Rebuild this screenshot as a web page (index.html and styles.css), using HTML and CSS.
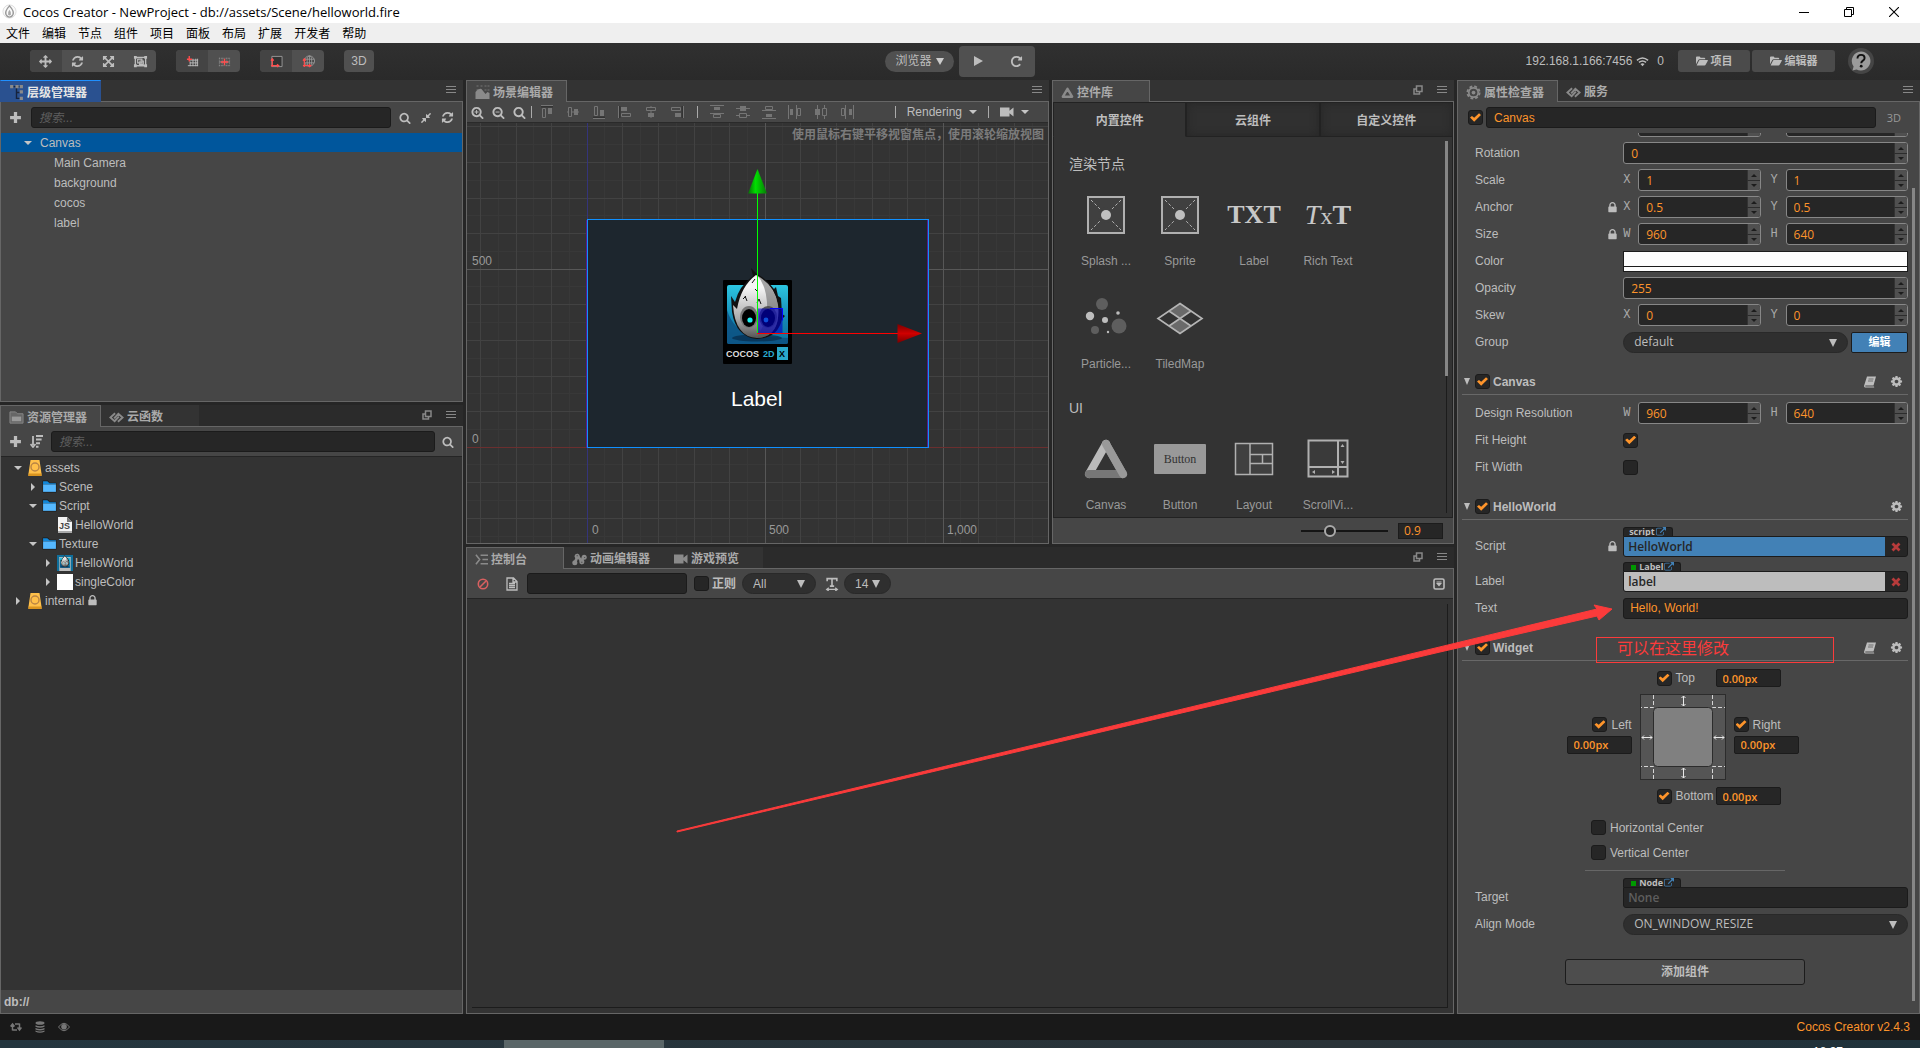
FILE: index.html
```html
<!DOCTYPE html>
<html lang="zh-CN">
<head>
<meta charset="utf-8">
<title>Cocos Creator - NewProject</title>
<link rel="stylesheet" href="styles.css">
</head>
<body>
<svg class="defs" aria-hidden="true">
  <defs>
    <symbol id="i-move" viewBox="0 0 1792 1792"><path d="M1792 896q0 26-19 45l-256 256q-19 19-45 19t-45-19-19-45v-128h-384v384h128q26 0 45 19t19 45-19 45l-256 256q-19 19-45 19t-45-19l-256-256q-19-19-19-45t19-45 45-19h128v-384h-384v128q0 26-19 45t-45 19-45-19l-256-256q-19-19-19-45t19-45l256-256q19-19 45-19t45 19 19 45v128h384v-384h-128q-26 0-45-19t-19-45 19-45l256-256q19-19 45-19t45 19l256 256q19 19 19 45t-19 45-45 19h-128v384h384v-128q0-26 19-45t45-19 45 19l256 256q19 19 19 45z"/></symbol>
    <symbol id="i-refresh" viewBox="0 0 1792 1792"><path d="M1639 1056q0 5-1 7-64 268-268 434.5t-478 166.5q-146 0-282.5-55t-243.5-157l-129 129q-19 19-45 19t-45-19-19-45v-448q0-26 19-45t45-19h448q26 0 45 19t19 45-19 45l-137 137q71 66 161 102t187 36q134 0 250-65t186-179q11-17 53-117 8-23 30-23h192q13 0 22.5 9.5t9.5 22.5zm25-800v448q0 26-19 45t-45 19h-448q-26 0-45-19t-19-45 19-45l138-138q-148-137-349-137-134 0-250 65t-186 179q-11 17-53 117-8 23-30 23h-199q-13 0-22.5-9.5t-9.5-22.5v-7q65-268 270-434.5t480-166.5q146 0 284 55.5t245 156.5l130-129q19-19 45-19t45 19 19 45z"/></symbol>
    <symbol id="i-repeat" viewBox="0 0 1792 1792"><path d="M1664 256v448q0 26-19 45t-45 19h-448q-42 0-59-40-17-39 14-69l138-138q-148-137-349-137-104 0-198.500 40.500t-163.500 109.500-109.500 163.500-40.500 198.500 40.500 198.500 109.500 163.500 163.500 109.500 198.500 40.500q119 0 225-52t179-147q7-10 23-12 15 0 25 9l137 138q9 8 9.500 20.500t-7.500 22.500q-109 132-264 204.500t-327 72.500q-156 0-298-61t-245-164-164-245-61-298 61-298 164-245 245-164 298-61q147 0 284.500 55.500t244.500 156.500l130-129q29-31 70-14 39 17 39 59z"/></symbol>
    <symbol id="i-expand" viewBox="0 0 1792 1792"><path d="M1411 541l-355 355 355 355 144-144q29-31 70-14 39 17 39 59v448q0 26-19 45t-45 19h-448q-42 0-59-40-17-39 14-69l144-144-355-355-355 355 144 144q31 30 14 69-17 40-59 40h-448q-26 0-45-19t-19-45v-448q0-42 40-59 39-17 69 14l144 144 355-355-355-355-144 144q-19 19-45 19-12 0-24-5-40-17-40-59v-448q0-26 19-45t45-19h448q42 0 59 40 17 39-14 69l-144 144 355 355 355-355-144-144q-31-30-14-69 17-40 59-40h448q26 0 45 19t19 45v448q0 42-39 59-13 5-25 5-26 0-45-19z"/></symbol>
    <symbol id="i-compress" viewBox="0 0 1792 1792"><path d="M896 960v448q0 26-19 45t-45 19-45-19l-144-144-332 332q-10 10-23 10t-23-10l-114-114q-10-10-10-23t10-23l332-332-144-144q-19-19-19-45t19-45 45-19h448q26 0 45 19t19 45zm755-672q0 13-10 23l-332 332 144 144q19 19 19 45t-19 45-45 19h-448q-26 0-45-19t-19-45v-448q0-26 19-45t45-19 45 19l144 144 332-332q10-10 23-10t23 10l114 114q10 10 10 23z"/></symbol>
    <symbol id="i-search" viewBox="0 0 1792 1792"><path d="M1216 832q0-185-131.500-316.500t-316.500-131.500-316.500 131.500-131.500 316.500 131.500 316.500 316.500 131.500 316.500-131.500 131.500-316.500zm512 832q0 52-38 90t-90 38q-54 0-90-38l-343-342q-179 124-399 124-143 0-273.500-55.500t-225-150-150-225-55.500-273.500 55.500-273.500 150-225 225-150 273.500-55.500 273.500 55.500 225 150 150 225 55.500 273.500q0 220-124 399l343 343q37 37 37 90z"/></symbol>
    <symbol id="i-zoomin" viewBox="0 0 1792 1792"><use href="#i-search"/><path d="M704 560h128v208h208v128h-208v208h-128v-208h-208v-128h208z"/></symbol>
    <symbol id="i-zoomout" viewBox="0 0 1792 1792"><use href="#i-search"/><path d="M496 768h544v128h-544z"/></symbol>
    <symbol id="i-lock" viewBox="0 0 1792 1792"><path d="M640 768h512v-192q0-106-75-181t-181-75-181 75-75 181v192zm832 96v576q0 40-28 68t-68 28h-960q-40 0-68-28t-28-68v-576q0-40 28-68t68-28h32v-192q0-184 132-316t316-132 316 132 132 316v192h32q40 0 68 28t28 68z"/></symbol>
    <symbol id="i-cog" viewBox="0 0 1792 1792"><path d="M1152 896q0-106-75-181t-181-75-181 75-75 181 75 181 181 75 181-75 75-181zm512-109v222q0 12-8 23t-20 13l-185 28q-19 54-39 91 35 50 107 138 10 12 10 25t-9 23q-27 37-99 108t-94 71q-12 0-26-9l-138-108q-44 23-91 38-16 136-29 186-7 28-36 28h-222q-14 0-24.500-8.500t-11.500-21.500l-28-184q-49-16-90-37l-141 107q-10 9-25 9-14 0-25-11-126-114-165-168-7-10-7-23 0-12 8-23 15-21 51-66.500t54-70.500q-27-50-41-99l-183-27q-13-2-21-12.500t-8-23.500v-222q0-12 8-23t19-13l186-28q14-46 39-92-40-57-107-138-10-12-10-24 0-10 9-23 26-36 98.500-107.500t94.500-71.500q13 0 26 10l138 107q44-23 91-38 16-136 29-186 7-28 36-28h222q14 0 24.500 8.500t11.500 21.500l28 184q49 16 90 37l142-107q9-9 24-9 13 0 25 10 129 119 165 170 7 8 7 22 0 12-8 23-15 21-51 66.500t-54 70.500q26 50 41 98l183 28q13 2 21 12.500t8 23.500z"/></symbol>
    <symbol id="i-ext" viewBox="0 0 1792 1792"><path d="M1408 928v320q0 119-84.500 203.500t-203.500 84.500h-832q-119 0-203.500-84.500t-84.500-203.500v-832q0-119 84.500-203.500t203.500-84.500h704q14 0 23 9t9 23v64q0 14-9 23t-23 9h-704q-66 0-113 47t-47 113v832q0 66 47 113t113 47h832q66 0 113-47t47-113v-320q0-14 9-23t23-9h64q14 0 23 9t9 23zm384-864v512q0 26-19 45t-45 19-45-19l-176-176-652 652q-10 10-23 10t-23-10l-114-114q-10-10-10-23t10-23l652-652-176-176q-19-19-19-45t19-45 45-19h512q26 0 45 19t19 45z"/></symbol>
    <symbol id="i-plus" viewBox="0 0 12 12"><path d="M4.500 1h3v3.500H11v3H7.500V11h-3V7.500H1v-3h3.500z"/></symbol>
    <symbol id="i-rect" viewBox="0 0 16 14"><path d="M2.500 2v10M13.500 2v10M2 2.500h12M2 11.500h12" fill="none" stroke="currentColor" stroke-width="1.400"/><path d="M1 1h3v3H1zM12 1h3v3h-3zM1 10h3v3H1zM12 10h3v3h-3z"/><path d="M5 4.500h4.500v4H5zM7.500 6.500H11v3.500H7z" fill="none" stroke="currentColor" stroke-width="1.200"/></symbol>
    <symbol id="i-pivot" viewBox="0 0 14 12"><path d="M4 4.500h9M4 7.500h9M2 10.500h11M4.500 6v5M7.500 3v8M10.500 3v8M12.500 3v8" stroke="#bbb" fill="none"/><path d="M3.500 0v6M1 3.500h5.500" stroke="#ff4d4d" stroke-width="1.500" fill="none"/></symbol>
    <symbol id="i-center" viewBox="0 0 14 12"><path d="M1.500 2v9M4.500 2v9M9.500 2v9M12.500 2v9M1 2.500h12M1 10.500h12" stroke="#8d8d8d" stroke-dasharray="1 1" fill="none"/><path d="M1 6.500h12" stroke="#8d8d8d"/><path d="M7 3v7M3 6.500h8" stroke="#ff4d4d" stroke-width="1.500" fill="none"/></symbol>
    <symbol id="i-local" viewBox="0 0 14 14"><path d="M2 1.500h11v11H2z" fill="#333" stroke="#999"/><path d="M2.500 5v8M1 11.500h8M1 6l1.500-2L4 6M7.500 10l2 1.500-2 1.500" stroke="#ff4d4d" stroke-width="1.300" fill="none"/></symbol>
    <symbol id="i-global" viewBox="0 0 14 14"><circle cx="8" cy="6.500" r="5.500" fill="#444" stroke="#999"/><ellipse cx="8" cy="6.500" rx="2.500" ry="5.500" fill="none" stroke="#999"/><path d="M3 4.500h10M3 8.500h10M8 1v11" stroke="#999"/><path d="M2.500 5v8M1 11.500h8M1 6l1.500-2L4 6M7.500 10l2 1.500-2 1.500" stroke="#ff4d4d" stroke-width="1.300" fill="none"/></symbol>
    <symbol id="i-play" viewBox="0 0 10 12"><path d="M1 1l9 5-9 5z"/></symbol>
    <symbol id="i-wifi" viewBox="0 0 14 11"><g fill="none" stroke="currentColor" stroke-width="1.700"><path d="M1 4.200q6-5 12 0M3.200 6.500q3.800-3.200 7.600 0"/></g><path d="M4.800 8.200q2.200-1.800 4.400 0L7 10.600z"/></symbol>
    <symbol id="i-folder" viewBox="0 0 13 10"><path d="M0 8.500V1q0-1 1-1h3l1 1.500h4q1 0 1 1V3H4Q3 3 2.500 3.800zM.8 9.600L3.200 4.600q.3-.6 1-.6h8.200q.7 0 .4.600L10.400 9q-.3.800-1.200.8H1z"/></symbol>
    <symbol id="i-help" viewBox="0 0 28 28"><circle cx="14" cy="14" r="13" fill="#454545"/><path d="M14 4.500a9.500 9.500 0 1 1-4.500 17.900L5.500 23.500l1.100-4A9.500 9.500 0 0 1 14 4.500z" fill="#9b9b9b"/><path d="M10.500 11.500q0-3.600 3.600-3.600 3.500 0 3.500 3 0 1.600-1.700 2.700-1.700 1.100-1.700 2.700" fill="none" stroke="#111" stroke-width="1.900"/><circle cx="14.200" cy="19.200" r="1.400" fill="#111"/></symbol>
    <symbol id="i-menu" viewBox="0 0 10 8"><path d="M0 .5h10M0 3.500h10M0 6.500h10" stroke="currentColor" stroke-width="1.200"/></symbol>
    <symbol id="i-pop" viewBox="0 0 10 10"><path d="M3.500 1h5.500v5.500H3.500zM3 4H1v5h5.500V7" fill="none" stroke="currentColor" stroke-width="1.500"/></symbol>
    <symbol id="i-tree" viewBox="0 0 12 14"><path d="M3 1.500h6M6 2v10.500h3M6 7h3" fill="none" stroke="#16233d" stroke-width="1.300"/><path d="M0 0h3v3H0zM5 0h3v3H5zM9 0h3v3H9zM9 5h3v3H9zM9 11h3v3H9z"/></symbol>
    <symbol id="i-scene" viewBox="0 0 14 15"><path d="M1 0h2v2H1zM5 0h2v2H5zM9 0h2v2H9zM12 0h2v2h-2zM1 4h2v2H1zM9 4h2v2H9zM12 4h2v2h-2z" opacity=".35"/><path d="M0 14V7q3-4 6-3l4 5 2-2 2 1v6z"/></symbol>
    <symbol id="i-assets" viewBox="0 0 16 14"><path d="M1 13V1h6l2 2h6v10z" fill="#666" stroke="#888"/><path d="M3 6h10v5H3z" fill="#999"/></symbol>
    <symbol id="i-cloud" viewBox="0 0 16 12"><path d="M6.500 1.500L1.500 6l4.500 4 4.500-5M9.500 10.500l5-4.500L10 2 5.500 7" fill="none" stroke="currentColor" stroke-width="2"/></symbol>
    <symbol id="i-tri" viewBox="0 0 14 13"><path d="M7 2.500L12 11H2z" fill="none" stroke="currentColor" stroke-width="2.600" stroke-linejoin="round"/></symbol>
    <symbol id="i-gearring" viewBox="0 0 16 16"><circle cx="8" cy="8" r="6.500" fill="none" stroke="currentColor" stroke-width="2" stroke-dasharray="3 2.100"/><circle cx="8" cy="8" r="5" fill="none" stroke="currentColor" stroke-width="1.800"/><circle cx="8" cy="8" r="2"/></symbol>
    <symbol id="i-console" viewBox="0 0 14 12"><path d="M1 1l4 5-4 5M6 1.500h8M8 6h6M6 10.500h8" fill="none" stroke="currentColor" stroke-width="1.700"/></symbol>
    <symbol id="i-anim" viewBox="0 0 16 13"><path d="M3 10L6 3l4 5 3-5" fill="none" stroke="currentColor" stroke-width="3"/><circle cx="3" cy="10" r="2.700"/><circle cx="5.500" cy="3" r="2.700"/><circle cx="10.500" cy="9" r="2.700"/><circle cx="13" cy="4" r="2.700"/><path d="M5 2h1v1H5zM10 9h1v1h-1zM13 4h1v1h-1z" fill="#333"/></symbol>
    <symbol id="i-video" viewBox="0 0 14 10"><path d="M0 .5h9.500v3.200L13.500 .5v9L9.500 6.300v3.200H0z"/></symbol>
    <symbol id="i-stop" viewBox="0 0 12 12"><circle cx="6" cy="6" r="4.700" fill="none" stroke="currentColor" stroke-width="1.600"/><path d="M3 9l6-6" stroke="currentColor" stroke-width="1.600"/></symbol>
    <symbol id="i-doc" viewBox="0 0 12 14"><path d="M1 1h6.500L11 4.500V13H1zM7 1v4h4M3 6.500h6M3 8.500h6M3 10.500h6" fill="none" stroke="currentColor" stroke-width="1.300"/></symbol>
    <symbol id="i-textw" viewBox="0 0 12 13"><path d="M1.500 4V1.500h9V4M6 1.500v7M4 8.500h4" fill="none" stroke="currentColor" stroke-width="1.500"/><path d="M1 11.500h10M3 10l-2 1.500L3 13M9 10l2 1.500L9 13" fill="none" stroke="currentColor" stroke-width="1.100"/></symbol>
    <symbol id="i-drop" viewBox="0 0 12 12"><rect x="1" y="1" width="10" height="10" rx="1.500" fill="none" stroke="currentColor" stroke-width="1.600"/><path d="M3 5h6L6 8.500zM3.500 3.500h5v1h-5z"/></symbol>
    <symbol id="i-sort" viewBox="0 0 13 13"><path d="M3 1v9M.5 9L3 12l2.500-3" fill="none" stroke="currentColor" stroke-width="1.800"/><path d="M6 0h7v2H6zM6 3.600h5.600v2H6zM6 7.200h4v2H6zM6 10.800h2.500v2H6z"/></symbol>
    <symbol id="i-book" viewBox="0 0 12 11"><path d="M3 0h9L9.500 9H1.500q-.6.600 0 1H10l.2 1H1Q-.4 10.500.3 8.500z"/><path d="M4.500 2.500h5M4 4.500h5" stroke="#666" stroke-width=".9"/></symbol>
    <symbol id="i-x" viewBox="0 0 10 10"><path d="M1.500 1.500l7 7M8.500 1.500l-7 7" stroke="currentColor" stroke-width="2.800"/></symbol>
    <symbol id="i-db" viewBox="0 0 14 16"><path d="M2.500 0h9l2 13.500V16H.5v-2.500z" fill="#ffc04a"/><path d="M.5 13.500h13V16H.5z" fill="#d99420"/><circle cx="7" cy="7" r="4" fill="none" stroke="#b98445" stroke-width="1.400"/></symbol>
    <symbol id="i-dir" viewBox="0 0 14 12"><path d="M.5.5h5l1.500 2h6.500v9H.5z" fill="#1a1a1a"/><path d="M1 1h4l2 2h6v1H1z" fill="#1287d8"/><path d="M1 4h12v7H1z" fill="#55b8ff"/></symbol>
    <symbol id="i-js" viewBox="0 0 14 16"><path d="M0 0h9l5 5v11H0z" fill="#f4f4f4"/><path d="M9 0v5h5z" fill="#777"/><path d="M0 14h14v2H0z" fill="#aaa"/><text x="1" y="12" font-size="9" font-weight="700" fill="#444">JS</text></symbol>
    <symbol id="i-at" viewBox="0 0 12 14"><path d="M0 1.500h12" stroke="#333" stroke-width="2"/><path d="M0 .5h12"  stroke="currentColor"/><path d="M1.500 3.500h3v9h-3z" fill="none" stroke="currentColor"/><path d="M7 3h4v6H7z"/></symbol>
    <symbol id="i-am" viewBox="0 0 12 14"><path d="M0 7h12" stroke="currentColor"/><path d="M1.500 2.500h3v9h-3z" fill="#464646" stroke="currentColor"/><path d="M7 4h4v6H7z"/></symbol>
    <symbol id="i-dt" viewBox="0 0 14 14"><path d="M0 .5h14M0 8.500h14" stroke="currentColor"/><path d="M4 2h6v3H4z"/><path d="M3.500 9.500h7v3h-7z" fill="none" stroke="currentColor"/></symbol>
    <symbol id="i-dm" viewBox="0 0 14 14"><path d="M0 3.500h14M0 10.500h14" stroke="currentColor"/><path d="M4 1h6v5H4z"/><path d="M3.500 8.500h7v4h-7z" fill="#464646" stroke="currentColor"/></symbol>
    <symbol id="i-sync" viewBox="0 0 12 10"><path d="M2.500 8.500v-6M.5 4.500l2-2.500 2 2.500M2.500 8H7M9.500 1.500v6M7.500 5.500l2 2.500 2-2.500M9.500 2H5" fill="none" stroke="currentColor" stroke-width="1.500"/></symbol>
    <symbol id="i-stack" viewBox="0 0 10 12"><ellipse cx="5" cy="2" rx="4.500" ry="1.800"/><path d="M.5 4.200q4.500 2 9 0v1.500q-4.500 2-9 0zM.5 7q4.500 2 9 0v1.500q-4.500 2-9 0zM.5 9.600q4.500 2 9 0v1.200q-4.500 2-9 0z"/></symbol>
    <symbol id="i-eye" viewBox="0 0 12 10"><path d="M.5 5Q6-2.500 11.500 5 6 12.500 .5 5z" fill="none" stroke="currentColor"/><circle cx="6" cy="4.800" r="2.800"/></symbol>
    <symbol id="i-flame" viewBox="0 0 16 16"><circle cx="8" cy="8" r="7" fill="#fafafa" stroke="#ddd"/><path d="M8 2q5 5.500 3.800 9Q10.500 14 8 14t-3.800-3Q3 7.500 8 2z" fill="none" stroke="#999" stroke-width="1.500"/><path d="M8 6q2.500 3 1.500 5.500-1.500 1.500-3 0Q5.500 9 8 6z" fill="#aaa"/></symbol>
    <symbol id="i-sprite" viewBox="0 0 38 38"><path d="M1 1h36v36H1z" fill="#404040" stroke="#b0b0b0" stroke-width="2"/><path d="M4 4l30 30M34 4L4 34" stroke="#b0b0b0" stroke-dasharray="3 2"/><circle cx="19" cy="19" r="8" fill="#404040"/><circle cx="19" cy="19" r="5" fill="#c0c0c0"/></symbol>
    <linearGradient id="g-sky" x2="0" y2="1"><stop offset="0" stop-color="#2cc5e0"/><stop offset=".6" stop-color="#1487b4"/><stop offset="1" stop-color="#0f6f9c"/></linearGradient>
    <linearGradient id="g-head" x2="0" y2="1"><stop offset=".2" stop-color="#f5f5f5"/><stop offset=".7" stop-color="#aaa"/><stop offset="1" stop-color="#555"/></linearGradient>
    <linearGradient id="g-green"><stop offset="0" stop-color="#0a6a0a"/><stop offset=".4" stop-color="#00e000"/><stop offset="1" stop-color="#087808"/></linearGradient>
    <linearGradient id="g-red" x2="0" y2="1"><stop offset="0" stop-color="#7a0000"/><stop offset=".5" stop-color="#d00000"/><stop offset="1" stop-color="#700"/></linearGradient>
    <symbol id="logo" viewBox="0 0 69 96">
      <rect y="12" width="69" height="84" rx="1"/>
      <rect x="4" y="17" width="61" height="59" rx="2" fill="url(#g-sky)"/>
      <path d="M4 42Q10 62 30 68L65 70v4q0 2-2 2H6q-2 0-2-2z" fill="#0d4f80" opacity=".8"/>
      <ellipse cx="34" cy="70" rx="25" ry="3.500" fill="#083050" opacity=".8"/>
      <path d="M28 0l6 6q10 5 17 15l2-2 2 9 3 2 1 16 3 2-3 3q-4 19-25 20Q13 69 9 44l-1-16 4 6Q16 18 30 8z" fill="#111"/>
      <path d="M33 7q19 10 22 30 3 32-21 33-22-1-24-33l4 4Q18 18 33 7z" fill="url(#g-head)"/>
      <path d="M34 7q18 11 21 30 3 32-21 33 4-8 10-20 2-30-10-43z" fill="#555" opacity=".5"/>
      <path d="M29 15l3-4M35 24l-3-3M22 28l2 5M20 31l3-3M34 35l2-4 2 5" stroke="#111" fill="none"/>
      <ellipse cx="26" cy="49" rx="9" ry="11" fill="#777"/><ellipse cx="45" cy="49" rx="9" ry="11" fill="#555"/>
      <ellipse cx="26" cy="50" rx="7" ry="9"/><ellipse cx="45" cy="50" rx="7" ry="9"/>
      <circle cx="27" cy="52" r="2.600" fill="#20f0f0"/><circle cx="43" cy="52" r="2.400" fill="#20c0f0"/>
    </symbol>
    <pattern id="grid" x="120" y="324" width="178" height="178" patternUnits="userSpaceOnUse">
      <path d="M17.500 0v178M53.500 0v178M89.500 0v178M124.500 0v178M160.500 0v178M0 17.500h178M0 53.500h178M0 89.500h178M0 124.500h178M0 160.500h178" stroke="#383838"/>
      <path d="M35.500 0v178M71.500 0v178M107.500 0v178M142.500 0v178M0 35.500h178M0 71.500h178M0 107.500h178M0 142.500h178" stroke="#424242"/>
      <path d="M.5 0v178M0 .5h178" stroke="#575757"/>
    </pattern>
  </defs>
</svg>

<header class="titlebar">
  <svg class="ic s15"><use href="#i-flame"/></svg>
  <span class="titlebar-text">Cocos Creator - NewProject - db://assets/Scene/helloworld.fire</span>
  <div class="window-buttons">
    <button aria-label="最小化"><svg class="ic s10" viewBox="0 0 10 10"><path d="M0 5.500h10" stroke="#000"/></svg></button>
    <button aria-label="还原"><svg class="ic s10" viewBox="0 0 10 10"><path d="M.5 2.500h7v7h-7zM2.500 2V.5h7v7H8" fill="none" stroke="#000"/></svg></button>
    <button aria-label="关闭"><svg class="ic s10" viewBox="0 0 10 10"><path d="M0 0l10 10M10 0L0 10" stroke="#000" stroke-width="1.100"/></svg></button>
  </div>
</header>
<nav class="menubar"><button>文件</button><button>编辑</button><button>节点</button><button>组件</button><button>项目</button><button>面板</button><button>布局</button><button>扩展</button><button>开发者</button><button>帮助</button></nav>

<div class="toolbar">
  <div class="toolbar-left">
    <div class="btn-group four">
      <button class="on" aria-label="移动"><svg class="ic s13"><use href="#i-move"/></svg></button><button aria-label="旋转"><svg class="ic s13"><use href="#i-refresh"/></svg></button><button aria-label="缩放"><svg class="ic s13"><use href="#i-expand"/></svg></button><button aria-label="矩形"><svg class="ic s15"><use href="#i-rect"/></svg></button>
    </div>
    <div class="btn-group two"><button class="on" aria-label="锚点"><svg class="ic s13"><use href="#i-pivot"/></svg></button><button aria-label="中心"><svg class="ic s13"><use href="#i-center"/></svg></button></div>
    <div class="btn-group two"><button class="on" aria-label="本地"><svg class="ic s13"><use href="#i-local"/></svg></button><button aria-label="世界"><svg class="ic s13"><use href="#i-global"/></svg></button></div>
    <div class="btn-group one"><button>3D</button></div>
  </div>
  <div class="toolbar-mid">
    <button class="browser">浏览器<i class="caret"></i></button>
    <div class="play-group"><button aria-label="运行"><svg class="ic s12"><use href="#i-play"/></svg></button><button aria-label="刷新"><svg class="ic s13"><use href="#i-repeat"/></svg></button></div>
  </div>
  <div class="toolbar-right">
    <span class="net">192.168.1.166:7456 <svg class="ic s13"><use href="#i-wifi"/></svg></span><span class="count">0</span>
    <button class="flat project"><svg class="ic s12"><use href="#i-folder"/></svg>项目</button>
    <button class="flat editor"><svg class="ic s12"><use href="#i-folder"/></svg>编辑器</button>
    <button class="help" aria-label="帮助"><svg class="ic s28"><use href="#i-help"/></svg></button>
  </div>
</div>

<main class="workspace">
  <div class="col-left">
    <section class="panel">
      <div class="panel-head"><div class="tab active focus w-tab"><svg class="ic s15"><use href="#i-tree"/></svg>层级管理器</div><div class="head-icons"><svg class="ic s10"><use href="#i-menu"/></svg></div></div>
      <div class="search-row">
        <button class="bare" aria-label="新建"><svg class="ic s13"><use href="#i-plus"/></svg></button>
        <input class="box grow" type="text" placeholder="搜索..." aria-label="搜索节点">
        <button class="bare" aria-label="搜索"><svg class="ic s12"><use href="#i-search"/></svg></button><button class="bare" aria-label="折叠"><svg class="ic s12"><use href="#i-compress"/></svg></button><button class="bare" aria-label="刷新"><svg class="ic s13"><use href="#i-refresh"/></svg></button>
      </div>
      <ul class="node-tree">
        <li class="selected"><i class="fold down"></i>Canvas</li>
        <li class="child">Main Camera</li><li class="child">background</li><li class="child">cocos</li><li class="child">label</li>
      </ul>
    </section>
    <section class="panel">
      <div class="panel-head dim"><div class="tab active w-tab"><svg class="ic s15"><use href="#i-assets"/></svg>资源管理器</div><div class="tab w-cloud"><svg class="ic s15"><use href="#i-cloud"/></svg>云函数</div><div class="head-icons"><svg class="ic s10"><use href="#i-pop"/></svg><svg class="ic s10"><use href="#i-menu"/></svg></div></div>
      <div class="search-row assets-row">
        <button class="bare" aria-label="新建"><svg class="ic s13"><use href="#i-plus"/></svg></button><button class="bare" aria-label="排序"><svg class="ic s13"><use href="#i-sort"/></svg></button>
        <input class="box grow" type="text" placeholder="搜索..." aria-label="搜索资源">
        <button class="bare" aria-label="搜索"><svg class="ic s12"><use href="#i-search"/></svg></button>
      </div>
      <ul class="asset-tree">
        <li><i class="fold down"></i><svg class="ic s16"><use href="#i-db"/></svg>assets</li>
        <li class="l1"><i class="fold right"></i><svg class="ic s15"><use href="#i-dir"/></svg>Scene</li>
        <li class="l1"><i class="fold down"></i><svg class="ic s15"><use href="#i-dir"/></svg>Script</li>
        <li class="l2"><i class="fold"></i><svg class="ic s16"><use href="#i-js"/></svg>HelloWorld</li>
        <li class="l1"><i class="fold down"></i><svg class="ic s15"><use href="#i-dir"/></svg>Texture</li>
        <li class="l2"><i class="fold right"></i><svg class="ic s16 thumb"><use href="#logo"/></svg>HelloWorld</li>
        <li class="l2"><i class="fold right"></i><i class="white-thumb"></i>singleColor</li>
        <li><i class="fold right"></i><svg class="ic s16"><use href="#i-db"/></svg>internal<svg class="ic s13 lock"><use href="#i-lock"/></svg></li>
      </ul>
      <div class="path">db://</div>
    </section>
  </div>

  <div class="col-mid">
    <div class="mid-top">
      <section class="panel">
        <div class="panel-head"><div class="tab active w-tab"><svg class="ic s15"><use href="#i-scene"/></svg>场景编辑器</div><div class="head-icons"><svg class="ic s10"><use href="#i-menu"/></svg></div></div>
        <div class="scene-tools">
          <svg class="ic s13"><use href="#i-zoomin"/></svg><svg class="ic s13"><use href="#i-zoomout"/></svg><svg class="ic s13"><use href="#i-search"/></svg><i class="sep"></i>
          <div class="aligns"><svg class="ic s14"><use href="#i-at"/></svg><svg class="ic s14"><use href="#i-am"/></svg><svg class="ic s14 flip"><use href="#i-at"/></svg><svg class="ic s14 turn"><use href="#i-at"/></svg><svg class="ic s14 rot"><use href="#i-am"/></svg><svg class="ic s14 rot"><use href="#i-at"/></svg></div><i class="sep"></i>
          <div class="aligns"><svg class="ic s14"><use href="#i-dt"/></svg><svg class="ic s14"><use href="#i-dm"/></svg><svg class="ic s14 flip"><use href="#i-dt"/></svg><svg class="ic s14 turn"><use href="#i-dt"/></svg><svg class="ic s14 turn"><use href="#i-dm"/></svg><svg class="ic s14 rot"><use href="#i-dt"/></svg></div>
          <div class="render"><i class="sep"></i><button class="bare">Rendering<i class="fold down"></i></button><i class="sep"></i><button class="bare" aria-label="相机"><svg class="ic s14"><use href="#i-video"/></svg><i class="fold down"></i></button></div>
        </div>
        <div class="scene-view">
          <svg class="scene-canvas" role="img" aria-label="场景">
            <rect width="100%" height="100%" fill="#333"/><rect width="100%" height="100%" fill="url(#grid)"/>
            <path d="M120.500 0v2000" stroke="#34347a"/><path d="M0 324.500h2000" stroke="#6b2f2f"/>
            <rect x="120.500" y="96.500" width="341" height="228" fill="#1d262e" stroke="#1090ff"/>
            <path d="M119.500 97v228M460.500 97v227" stroke="#5a1a8a"/>
            <svg x="256" y="145" width="69" height="96"><use href="#logo"/></svg>
            <text x="259" y="234" class="logo-text" fill="#ddd">COCOS</text><text x="296" y="234" class="logo-text" fill="#2aa9cc">2D</text>
            <rect x="310" y="224" width="11" height="13" fill="#2aa9cc"/><text x="312" y="234" class="logo-text" fill="#000">X</text>
            <text x="264" y="283" class="scene-label">Label</text>
            <rect x="290.500" y="185.500" width="25" height="25" fill="#0000c8" fill-opacity=".6"/><path d="M303 185.500h12.500v12" stroke="#00f" fill="none"/>
            <path d="M290.500 70v140" stroke="#0f0"/><path d="M290.500 46L300 70.500h-19z" fill="url(#g-green)"/>
            <path d="M290 210.500h141" stroke="#f00"/><path d="M455 210.500L430.500 201v19z" fill="url(#g-red)"/>
            <g class="axis"><text x="5" y="142">500</text><text x="5" y="320">0</text><text x="125" y="411">0</text><text x="302" y="411">500</text><text x="480" y="411">1,000</text></g>
          </svg>
          <p class="hint">使用鼠标右键平移视窗焦点，使用滚轮缩放视图</p>
        </div>
      </section>
      <section class="panel">
        <div class="panel-head"><div class="tab active w-lib"><svg class="ic s13"><use href="#i-tri"/></svg>控件库</div><div class="head-icons"><svg class="ic s10"><use href="#i-pop"/></svg><svg class="ic s10"><use href="#i-menu"/></svg></div></div>
        <div class="lib">
          <div class="lib-tabs"><button class="on">内置控件</button><button>云组件</button><button>自定义控件</button></div>
          <div class="lib-body">
            <h2>渲染节点</h2>
            <div class="lib-grid">
              <figure><svg class="pic" viewBox="0 0 54 54"><use href="#i-sprite" x="8" y="8" width="38" height="38"/></svg><figcaption>Splash ...</figcaption></figure>
              <figure><svg class="pic" viewBox="0 0 54 54"><use href="#i-sprite" x="8" y="8" width="38" height="38"/></svg><figcaption>Sprite</figcaption></figure>
              <figure><svg class="pic" viewBox="0 0 54 54"><text x="27" y="35" text-anchor="middle" class="txt-logo">TXT</text></svg><figcaption>Label</figcaption></figure>
              <figure><svg class="pic" viewBox="0 0 54 54"><text x="27" y="36" text-anchor="middle" class="rich-logo"><tspan font-style="italic">T</tspan><tspan font-size="24">x</tspan><tspan font-weight="700">T</tspan></text></svg><figcaption>Rich Text</figcaption></figure>
              <figure><svg class="pic" viewBox="0 0 54 54"><g fill="#5e5e5e"><circle cx="23" cy="13" r="6"/><circle cx="40" cy="35" r="7.500"/><circle cx="16" cy="39" r="4"/></g><g fill="#bdbdbd"><circle cx="11" cy="25" r="4.200"/><circle cx="26" cy="29" r="3"/><circle cx="39" cy="22" r="1.800"/><circle cx="29" cy="41" r="1.200"/></g></svg><figcaption>Particle...</figcaption></figure>
              <figure><svg class="pic" viewBox="0 0 54 54"><path d="M27 12.500l11 7.500-11 7.500L16 20zM27 27.500L38 35l-11 7.500L16 35z" fill="#6a6a6a"/><path d="M27 12.500L49 27.500 27 42.500 5 27.500zM16 20l22 15M38 20L16 35" fill="none" stroke="#b5b5b5" stroke-width="1.700"/></svg><figcaption>TiledMap</figcaption></figure>
            </div>
            <h2>UI</h2>
            <div class="lib-grid">
              <figure><svg class="pic" viewBox="0 0 54 54"><g fill="none" stroke-width="8" stroke-linecap="round"><path d="M44 42L27 12" stroke="#8f8f8f"/><path d="M27 12L10 42" stroke="#bababa"/><path d="M10 42h34" stroke="#777"/><path d="M27 12l17 30" stroke="#999"/></g></svg><figcaption>Canvas</figcaption></figure>
              <figure><svg class="pic" viewBox="0 0 54 54"><rect x="1" y="12" width="52" height="30" rx="1" fill="#999"/><text x="27" y="31" text-anchor="middle" class="btn-logo">Button</text></svg><figcaption>Button</figcaption></figure>
              <figure><svg class="pic" viewBox="0 0 54 54"><path d="M8.500 11.500h37v31h-37zM23 11.500v31M23 22.500h22.500M23 31.500h22.500M35.500 22.500v9" fill="#404040" stroke="#b0b0b0" stroke-width="1.500"/></svg><figcaption>Layout</figcaption></figure>
              <figure><svg class="pic" viewBox="0 0 54 54"><path d="M7.500 8.500h39v36h-39zM37 8.500v36M7.500 35h39" fill="#3a3a3a" stroke="#b0b0b0" stroke-width="2"/><path d="M41.500 12l2 3h-4zM41.500 32l2-3h-4zM11 40l3-2v4zM34 40l-3-2v4z" fill="#b0b0b0"/></svg><figcaption>ScrollVi...</figcaption></figure>
            </div>
            <i class="lib-scroll"></i>
          </div>
          <div class="lib-foot"><input type="range" min="0" max="100" value="31" aria-label="缩放"><input class="zoom-value" type="text" value="0.9" aria-label="缩放值"></div>
        </div>
      </section>
    </div>
    <section class="panel">
      <div class="panel-head dim"><div class="tab active w-console"><svg class="ic s13"><use href="#i-console"/></svg>控制台</div><div class="tab w-anim"><svg class="ic s15"><use href="#i-anim"/></svg>动画编辑器</div><div class="tab w-game"><svg class="ic s14"><use href="#i-video"/></svg>游戏预览</div><div class="head-icons"><svg class="ic s10"><use href="#i-pop"/></svg><svg class="ic s10"><use href="#i-menu"/></svg></div></div>
      <div class="console-tools">
        <button class="bare stop" aria-label="清除"><svg class="ic s12"><use href="#i-stop"/></svg></button><button class="bare doc" aria-label="日志"><svg class="ic s14"><use href="#i-doc"/></svg></button>
        <input class="box filter" type="text" aria-label="过滤">
        <label class="regex"><input type="checkbox" class="chk">正则</label>
        <span class="pill pill-all"><select aria-label="类型"><option>All</option></select></span>
        <svg class="ic s14 tw"><use href="#i-textw"/></svg>
        <span class="pill pill-size"><select aria-label="字号"><option>14</option></select></span>
        <button class="bare collapse" aria-label="折叠"><svg class="ic s12"><use href="#i-drop"/></svg></button>
      </div>
      <div class="console-body"></div>
    </section>
  </div>

  <section class="panel inspector">
    <div class="panel-head"><div class="tab active w-tab"><svg class="ic s15"><use href="#i-gearring"/></svg>属性检查器</div><div class="tab"><svg class="ic s15"><use href="#i-cloud"/></svg>服务</div><div class="head-icons"><svg class="ic s10"><use href="#i-menu"/></svg></div></div>
    <div class="name-row"><input type="checkbox" class="chk" checked aria-label="启用"><input class="box grow" type="text" value="Canvas" aria-label="节点名"><span class="threed">3D</span></div>
    <div class="inspect">
      <div class="clip"><div class="row"><span></span><div class="vec"><b></b><span class="num"><input type="text" aria-label="Position X"><span class="spin"><button aria-label="增"></button><button aria-label="减"></button></span></span><b></b><span class="num"><input type="text" aria-label="Position Y"><span class="spin"><button aria-label="增"></button><button aria-label="减"></button></span></span></div></div></div>
      <div class="props first">
        <div class="row"><label for="rot">Rotation</label><span class="num"><input id="rot" type="text" value="0"><span class="spin"><button aria-label="增"></button><button aria-label="减"></button></span></span></div>
        <div class="row"><label for="sx">Scale</label><div class="vec"><b>X</b><span class="num"><input id="sx" type="text" value="1"><span class="spin"><button aria-label="增"></button><button aria-label="减"></button></span></span><b>Y</b><span class="num"><input type="text" value="1" aria-label="Scale Y"><span class="spin"><button aria-label="增"></button><button aria-label="减"></button></span></span></div></div>
        <div class="row"><label for="ax">Anchor<svg class="ic s13"><use href="#i-lock"/></svg></label><div class="vec"><b>X</b><span class="num"><input id="ax" type="text" value="0.5"><span class="spin"><button aria-label="增"></button><button aria-label="减"></button></span></span><b>Y</b><span class="num"><input type="text" value="0.5" aria-label="Anchor Y"><span class="spin"><button aria-label="增"></button><button aria-label="减"></button></span></span></div></div>
        <div class="row"><label for="w">Size<svg class="ic s13"><use href="#i-lock"/></svg></label><div class="vec"><b>W</b><span class="num"><input id="w" type="text" value="960"><span class="spin"><button aria-label="增"></button><button aria-label="减"></button></span></span><b>H</b><span class="num"><input type="text" value="640" aria-label="Size H"><span class="spin"><button aria-label="增"></button><button aria-label="减"></button></span></span></div></div>
        <div class="row"><label for="col">Color</label><button id="col" class="color" aria-label="Color"></button></div>
        <div class="row"><label for="op">Opacity</label><span class="num"><input id="op" type="text" value="255"><span class="spin"><button aria-label="增"></button><button aria-label="减"></button></span></span></div>
        <div class="row"><label for="kx">Skew</label><div class="vec"><b>X</b><span class="num"><input id="kx" type="text" value="0"><span class="spin"><button aria-label="增"></button><button aria-label="减"></button></span></span><b>Y</b><span class="num"><input type="text" value="0" aria-label="Skew Y"><span class="spin"><button aria-label="增"></button><button aria-label="减"></button></span></span></div></div>
        <div class="row"><label for="grp">Group</label><div class="group"><span class="pill grow"><select id="grp"><option>default</option></select></span><button class="edit">编辑</button></div></div>
      </div>

      <div class="comp-head"><i class="tri"></i><label><input type="checkbox" class="chk" checked>Canvas</label><svg class="ic s12 book"><use href="#i-book"/></svg><svg class="ic s13"><use href="#i-cog"/></svg></div>
      <div class="props">
        <div class="row"><label for="dw">Design Resolution</label><div class="vec"><b>W</b><span class="num"><input id="dw" type="text" value="960"><span class="spin"><button aria-label="增"></button><button aria-label="减"></button></span></span><b>H</b><span class="num"><input type="text" value="640" aria-label="Design H"><span class="spin"><button aria-label="增"></button><button aria-label="减"></button></span></span></div></div>
        <div class="row"><label for="fh">Fit Height</label><input id="fh" type="checkbox" class="chk" checked></div>
        <div class="row"><label for="fw">Fit Width</label><input id="fw" type="checkbox" class="chk"></div>
      </div>

      <div class="comp-head"><i class="tri"></i><label><input type="checkbox" class="chk" checked>HelloWorld</label><svg class="ic s13"><use href="#i-cog"/></svg></div>
      <div class="props">
        <div class="row obj"><label>Script<svg class="ic s13"><use href="#i-lock"/></svg></label><div class="ref"><span class="tag">script<svg class="ic s10"><use href="#i-ext"/></svg></span><div class="ref-box"><span class="ref-name blue">HelloWorld</span><button aria-label="移除"><svg class="ic s10"><use href="#i-x"/></svg></button></div></div></div>
        <div class="row obj"><label>Label</label><div class="ref"><span class="tag"><i class="green"></i>Label<svg class="ic s10"><use href="#i-ext"/></svg></span><div class="ref-box"><span class="ref-name gray">label</span><button aria-label="移除"><svg class="ic s10"><use href="#i-x"/></svg></button></div></div></div>
        <div class="row"><label for="txt">Text</label><input id="txt" class="box text-box" type="text" value="Hello, World!"></div>
      </div>

      <div class="comp-head"><i class="tri"></i><label><input type="checkbox" class="chk" checked>Widget</label><svg class="ic s12 book"><use href="#i-book"/></svg><svg class="ic s13"><use href="#i-cog"/></svg></div>
      <div class="widget">
        <div class="w-line"><label><input type="checkbox" class="chk" checked>Top</label><input class="px" type="text" value="0.00px" aria-label="Top"></div>
        <div class="w-side"><label class="to-right"><input type="checkbox" class="chk" checked>Left</label><input class="px" type="text" value="0.00px" aria-label="Left"></div>
        <svg class="w-box" viewBox="0 0 86 86"><rect x=".5" y=".5" width="85" height="85" fill="#555" stroke="#2c2c2c"/><path d="M13.500 1v12.500H1M72.500 1v12.500H85M13.500 85V72.500H1M72.500 85V72.500H85" fill="none" stroke="#d5d5d5" stroke-dasharray="4 2"/><rect x="13.500" y="13.500" width="59" height="59" rx="4" fill="#808080" stroke="#2c2c2c"/><path d="M43.500 2v10M41.500 4l2-2 2 2M41.500 10l2 2 2-2M43.500 74v10M41.500 76l2-2 2 2M41.500 82l2 2 2-2M2 43.500h10M4 41.500l-2 2 2 2M10 41.500l2 2-2 2M74 43.500h10M76 41.500l-2 2 2 2M82 41.500l2 2-2 2" fill="none" stroke="#e8e8e8"/></svg>
        <div class="w-side"><label><input type="checkbox" class="chk" checked>Right</label><input class="px" type="text" value="0.00px" aria-label="Right"></div>
        <div class="w-line"><label><input type="checkbox" class="chk" checked>Bottom</label><input class="px" type="text" value="0.00px" aria-label="Bottom"></div>
      </div>
      <div class="centers"><label><input type="checkbox" class="chk">Horizontal Center</label><label><input type="checkbox" class="chk">Vertical Center</label></div>
      <div class="props">
        <div class="row obj"><label>Target</label><div class="ref"><span class="tag"><i class="green"></i>Node<svg class="ic s10"><use href="#i-ext"/></svg></span><div class="ref-box"><span class="ref-name none">None</span></div></div></div>
        <div class="row"><label for="am">Align Mode</label><span class="pill"><select id="am"><option>ON_WINDOW_RESIZE</option></select></span></div>
      </div>
      <button class="add">添加组件</button>
      <i class="inspect-scroll"></i>
    </div>
  </section>
</main>

<footer class="status"><svg class="ic s12"><use href="#i-sync"/></svg><svg class="ic s12"><use href="#i-stack"/></svg><svg class="ic s12"><use href="#i-eye"/></svg><span class="version">Cocos Creator v2.4.3</span></footer>
<div class="taskbar"><i class="task"></i><span class="clock">18:37</span></div>

<svg class="arrow" aria-hidden="true"><path d="M677 831L1597 609 1594 605 1612 609 1599 620 1597 616 1440 652 677 832z" fill="#fb3b3b" stroke="#fb3b3b"/></svg>
<div class="note">可以在这里修改</div>
</body>
</html>
```
FILE: styles.css
```css
* { box-sizing: border-box; }
body {
  margin: 0;
  height: 100vh;
  position: relative;
  display: flex;
  flex-direction: column;
  overflow: hidden;
  background: #262626;
  color: #bdbdbd;
  font: 12px/16px "Liberation Sans", "Noto Sans CJK SC", sans-serif;
}
button, input, select { font: inherit; color: inherit; margin: 0; padding: 0; border: 0; background: none; }
ul, h2, p, figure { margin: 0; padding: 0; list-style: none; }
i { font-style: normal; }
.defs { position: absolute; width: 0; height: 0; }
.ic { fill: currentColor; flex: none; display: block; }
.s10 { width: 10px; height: 10px; }
.s12 { width: 12px; height: 12px; }
.s13 { width: 13px; height: 13px; }
.s14 { width: 14px; height: 14px; }
.s15 { width: 15px; height: 15px; }
.s16 { width: 16px; height: 16px; }
.s28 { width: 28px; height: 28px; }
.grow { flex: 1; min-width: 0; }

/* window chrome */
.titlebar { display: flex; align-items: center; height: 23px; flex: none; padding-left: 2px; background: #fff; color: #000; font-family: "Open Sans", "Noto Sans CJK SC", sans-serif; font-size: 13px; }
.titlebar-text { margin-left: 6px; }
.window-buttons { display: flex; margin-left: auto; height: 20px; padding-right: 4px; }
.window-buttons button { width: 45px; display: grid; place-items: center; }
.menubar { display: flex; gap: 12px; height: 20px; flex: none; padding: 1px 6px 0; background: #efefef; color: #000; }

.toolbar { display: grid; grid-template-columns: 1fr auto 1fr; align-items: center; height: 37px; flex: none; padding: 0 45px 1px 30px; background: linear-gradient(#303030, #2a2a2a); }
.toolbar-left, .toolbar-mid, .toolbar-right { display: flex; align-items: center; }
.toolbar-left { gap: 20px; }
.btn-group { display: flex; height: 22px; border-radius: 4px; overflow: hidden; background: #505050; }
.btn-group button { flex: 1; display: grid; place-items: center; }
.btn-group .on { background: #444; }
.four { width: 126px; }
.two { width: 64px; }
.one { width: 30px; }
.toolbar-mid { gap: 5px; margin-left: 15px; }
.browser { display: flex; align-items: center; justify-content: center; gap: 4px; width: 69px; height: 21px; border-radius: 11px; background: #505050; }
.caret { border: 4px solid transparent; border-top: 7px solid #ccc; border-bottom: 0; }
.play-group { display: flex; width: 76px; height: 31px; border-radius: 4px; background: #505050; }
.play-group button { flex: 1; display: grid; place-items: center; }
.toolbar-right { justify-content: flex-end; }
.net { display: flex; align-items: center; gap: 4px; }
.count { margin: 0 14px 0 8px; }
.flat { display: flex; align-items: center; justify-content: center; gap: 3px; height: 22px; border-radius: 3px; background: #4b4b4b; font-weight: 700; font-size: 11px; }
.project { width: 72px; }
.editor { width: 83px; margin: 0 12px 0 2px; }

/* panels */
.workspace { flex: 1; min-height: 0; display: grid; grid-template-columns: 463fr 988fr 463fr; gap: 3px; }
.col-left, .col-mid { display: grid; gap: 3px; min-width: 0; min-height: 0; }
.col-left { grid-template-rows: minmax(0, 322fr) minmax(0, 609fr); }
.col-mid { grid-template-rows: minmax(0, 464fr) minmax(0, 467fr); }
.mid-top { display: grid; grid-template-columns: minmax(0, 583fr) minmax(0, 402fr); gap: 3px; }
.panel { display: flex; flex-direction: column; min-width: 0; min-height: 0; border: 1px solid #666; border-top: 0; background: #464646; }
.panel-head { display: flex; height: 22px; flex: none; margin: 0 -1px; background: #333; box-shadow: inset 0 -1px #666; }
.panel-head.dim { background: #2b2b2b; }
.tab { display: flex; align-items: center; gap: 3px; padding: 2px 8px 0; color: #aaa; font-weight: 700; background: #333; box-shadow: inset 0 -1px #666; }
.tab .ic { color: #8a8a8a; }
.tab.active { border: 1px solid #666; border-bottom: 0; background: #464646; box-shadow: none; }
.tab.focus { border-color: #2a5190; border-top-color: #2090ff; background: #2a5190; color: #e5e5e5; }
.w-tab { width: 101px; }
.w-cloud { width: 98px; }
.w-lib { width: 98px; }
.w-console { width: 98px; }
.w-anim { width: 102px; }
.w-game { width: 97px; }
.head-icons { display: flex; gap: 14px; margin: 5px 7px 0 auto; color: #888; }
.bare { display: flex; align-items: center; gap: 7px; }
.search-row { display: flex; align-items: center; gap: 9px; height: 31px; flex: none; padding: 0 8px; }
.search-row .box { margin-right: -1px; }
.assets-row { gap: 8px; height: 30px; border-bottom: 1px solid #252525; }
.box { height: 21px; padding: 0 7px; border: 1px solid #1b1b1b; border-radius: 3px; background: #262626; color: #fd942b; }
.box::placeholder { color: #5e5e5e; font-style: italic; }

.node-tree li { display: flex; align-items: center; height: 20px; padding-left: 53px; }
.node-tree .selected { height: 19px; margin-bottom: 1px; padding-left: 23px; background: #00569c; }
.node-tree .fold { margin-right: 8px; }
.fold { width: 8px; flex: none; }
.fold.down { height: 0; border: 4px solid transparent; border-top-color: #c5c5c5; border-bottom: 0; }
.fold.right { width: 0; border: 4px solid transparent; border-left-color: #c5c5c5; border-right: 0; margin: 0 2px; }
.asset-tree { flex: 1; min-height: 0; padding-top: 1px; background: #333; }
.asset-tree li { display: flex; align-items: center; gap: 2px; height: 19px; padding-left: 13px; }
.asset-tree .fold { margin-right: 3px; }
.asset-tree .fold.right { margin-right: 5px; }
.asset-tree .l1 { padding-left: 28px; }
.asset-tree .l2 { padding-left: 43px; }
.white-thumb { width: 16px; height: 16px; background: #fff; }
.thumb { background: #0f6f9c; }
.path { height: 23px; flex: none; padding: 4px 3px; font-weight: 700; }

/* scene */
.scene-tools { display: flex; align-items: center; gap: 8px; height: 21px; flex: none; padding-left: 4px; border-bottom: 1px solid #2a2a2a; }
.sep { width: 1px; height: 12px; background: #aaa; }
.scene-tools > .sep { margin-left: -3px; }
.aligns { display: flex; gap: 12px; color: #757575; }
.scene-tools .aligns + .sep { margin-left: 5px; margin-right: 4px; }
.flip { transform: scaleY(-1); }
.turn { transform: rotate(-90deg); }
.rot { transform: rotate(90deg); }
.render { display: flex; align-items: center; gap: 11px; margin-left: auto; padding-right: 19px; }
.scene-view { flex: 1; min-height: 0; position: relative; }
.scene-canvas { display: block; width: 100%; height: 100%; }
.hint { position: absolute; top: 4px; right: 4px; color: #7b7b7b; font-weight: 700; }
.axis { fill: #999; }
.scene-label { fill: #fff; font-size: 21px; }
.logo-text { font: 700 9px "Liberation Sans", sans-serif; }

/* widget library */
.lib { flex: 1; min-height: 0; display: flex; flex-direction: column; }
.lib-tabs { display: grid; grid-template-columns: repeat(3, 1fr); height: 35px; flex: none; }
.lib-tabs button { padding-top: 2px; border: 1px solid #222; background: #303030; font-weight: 700; box-shadow: inset 0 0 8px #262626; }
.lib-tabs .on { border-bottom-color: #333; background: #333; box-shadow: none; }
.lib-body { flex: 1; min-height: 0; overflow: hidden; position: relative; padding: 16px 15px 0; background: #333; border: 1px solid #222; border-top: 0; }
.lib-body h2 { font-size: 14px; line-height: 22px; font-weight: 400; }
.lib-grid { display: grid; grid-template-columns: repeat(auto-fill, 74px); row-gap: 22px; margin: 13px 0 25px; }
.lib-grid figure { display: grid; justify-items: center; row-gap: 11px; }
.pic { width: 54px; height: 54px; overflow: visible; }
.lib-grid figcaption { color: #999; line-height: 16px; }
.txt-logo { font: 700 26px "Liberation Serif", serif; fill: #c8c8c8; }
.rich-logo { font: 28px "Liberation Serif", serif; fill: #c8c8c8; }
.btn-logo { font: 12px "Liberation Serif", serif; fill: #333; }
.lib-scroll { position: absolute; top: 4px; right: 4px; bottom: 4px; width: 3px; background: linear-gradient(#868686, #868686) 0 0 / 3px 235px no-repeat, linear-gradient(#1c1c1c, #1c1c1c) 1px 0 / 1px 100% no-repeat; }
.lib-foot { display: flex; align-items: center; justify-content: flex-end; gap: 10px; height: 25px; flex: none; padding-right: 10px; }
.lib-foot input[type=range] { appearance: none; width: 87px; height: 12px; background: linear-gradient(#151515, #151515) 0 5px / 100% 2px no-repeat; }
.lib-foot input[type=range]::-webkit-slider-thumb { appearance: none; width: 12px; height: 12px; border: 2px solid #aaa; border-radius: 50%; background: #262626; }
.zoom-value { width: 45px; height: 16px; padding: 0 5px; border: 1px solid #1c1c1c; background: #262626; color: #fd942b; font-family: "Open Sans", sans-serif; }

/* console */
.console-tools { display: flex; align-items: center; height: 30px; flex: none; padding: 0 8px 0 10px; border-bottom: 1px solid #252525; }
.stop { color: #d86060; }
.doc { margin: 0 8px 0 16px; }
.filter { width: 160px; }
.regex { display: flex; align-items: center; gap: 3px; margin: 0 6px 0 7px; font-weight: 700; }
.pill { display: block; position: relative; height: 21px; border-radius: 11px; background: #2f2f2f; border: 1px solid #292929; font-family: "Open Sans", sans-serif; }
.pill select { appearance: none; display: block; width: 100%; height: 19px; padding: 0 10px; }
.pill::after { content: ""; position: absolute; right: 10px; top: 6px; border: 4px solid transparent; border-top: 8px solid #bdbdbd; border-bottom: 0; pointer-events: none; }
.pill-all { width: 74px; font-family: inherit; }
.pill-size { width: 47px; font-family: inherit; }
.tw { margin: 0 5px 0 9px; }
.collapse { margin-left: auto; }
.console-body { flex: 1; background: #333; border: 5px solid #333; box-shadow: inset 0 -1px #1c1c1c, inset -1px 0 #1c1c1c; }

/* inspector */
.chk { appearance: none; display: grid; place-items: center; flex: none; width: 15px; height: 15px; border: 1px solid #1b1b1b; border-radius: 3px; background: #262626; }
.chk:checked::before { content: ""; width: 11px; height: 9px; background: #fd942b; clip-path: polygon(0 50%, 18% 32%, 38% 54%, 82% 4%, 100% 22%, 38% 98%); }
.name-row { display: flex; align-items: center; gap: 3px; height: 31px; flex: none; padding: 0 18px 0 10px; }
.name-row .threed { margin-left: 8px; color: #999; font-family: "Open Sans", sans-serif; font-size: 11px; }
.inspect { flex: 1; min-height: 0; overflow: hidden; position: relative; display: flex; flex-direction: column; padding: 0 11px 0 4px; }
.clip { display: flex; align-items: flex-end; height: 4px; overflow: hidden; flex: none; }
.clip .row { flex: 1; padding-left: 13px; }
.props { display: grid; gap: 5px; flex: none; padding: 7px 0 0 13px; }
.props.first { padding-top: 5px; }
.row { display: grid; grid-template-columns: minmax(0, 13fr) minmax(0, 25fr); align-items: center; height: 22px; }
.row > label { display: flex; align-items: center; justify-content: space-between; padding-right: 4px; }
.row.obj { height: 30px; }
.row.obj > label { margin-top: 8px; }
.vec { display: grid; grid-template-columns: 15px 1fr 25px 1fr; }
.vec b { font: 12px/22px "Liberation Mono", monospace; color: #aaa; }
.vec b + .num + b { padding-left: 10px; }
.num { display: flex; min-width: 0; height: 22px; border: 1px solid #878787; border-radius: 3px; background: #262626; overflow: hidden; }
.num input { flex: 1; min-width: 0; padding: 1px 7px 0; color: #fd942b; font-family: "Open Sans", sans-serif; }
.spin { display: grid; grid-template-rows: 1fr 1fr; width: 13px; background: #505050; }
.spin button { display: grid; place-items: center; border-left: 1px solid #333; }
.spin button + button { border-top: 1px solid #2c2c2c; }
.spin button::before { content: ""; border: 3px solid transparent; border-bottom-color: #1c1c1c; border-top: 0; }
.spin button + button::before { border-top: 3px solid #1c1c1c; border-bottom: 0; }
.color { height: 21px; border: 1px solid #1c1c1c; background: linear-gradient(#1c1c1c, #1c1c1c) 0 14px / 100% 1px no-repeat, #fdfdfd; }
.group { display: flex; gap: 3px; }
.edit { width: 57px; height: 21px; border: 1px solid #1c1c1c; border-radius: 2px; background: #4281b6; color: #fff; font-weight: 700; font-size: 11px; }
.comp-head { display: flex; align-items: center; height: 24px; flex: none; margin-top: 18px; padding: 0 5px 2px 2px; border-bottom: 1px solid #686868; }
.comp-head label { display: flex; align-items: center; gap: 3px; margin-right: auto; font-weight: 700; }
.tri { margin-right: 5px; border: 3px solid transparent; border-top: 7px solid #bdbdbd; border-bottom: 0; }
.book { margin-right: 14px; }
.ref { display: grid; align-content: start; justify-items: start; }
.tag { display: flex; align-items: center; gap: 1px; height: 9px; padding: 0 6px 0 5px; border: 1px solid #1b1b1b; border-bottom: 0; border-radius: 3px 3px 0 0; background: #262626; font: 700 9px/8px "Open Sans", sans-serif; }
.tag .ic { color: #4281b6; }
.green { width: 5px; height: 5px; margin: 0 2px; background: #090; }
.ref-box { display: flex; width: 100%; height: 21px; border: 1px solid #1b1b1b; border-radius: 0 3px 3px 3px; background: #262626; overflow: hidden; }
.ref-name { flex: 1; padding: 1px 4px; font: 600 12px/18px "Open Sans", sans-serif; }
.blue { background: #4281b6; color: #262626; }
.gray { background: #bdbdbd; color: #262626; }
.none { color: #5e5e5e; }
.ref-box button { display: grid; place-items: center; width: 22px; color: #b83b3b; }
.text-box { width: 100%; padding: 0 6px; }
.widget { display: grid; grid-template-columns: 65px 86px 65px; column-gap: 8px; row-gap: 7px; justify-content: center; flex: none; margin: 8px 5px 0 0; }
.widget label, .centers label { display: flex; align-items: center; gap: 4px; }
.w-line { grid-column: 2 / 4; display: flex; align-items: center; padding-left: 17px; }
.w-line label { width: 59px; }
.w-line .px { width: 65px; }
.w-side { align-self: center; display: grid; gap: 3px; padding-bottom: 4px; }
.w-side .to-right { justify-content: flex-end; }
.w-box { width: 86px; height: 86px; }
.px { width: 100%; height: 18px; padding: 0 6px; border: 1px solid #1b1b1b; border-radius: 2px; background: #262626; color: #fd942b; font: 600 11px/16px "Open Sans", sans-serif; }
.centers { display: grid; gap: 10px; align-self: center; width: 200px; flex: none; margin-top: 15px; padding: 0 0 10px 6px; border-bottom: 1px solid #666; }
.centers label { height: 15px; }
.add { align-self: center; width: 240px; height: 26px; flex: none; margin-top: 24px; border: 1px solid #1c1c1c; border-radius: 3px; background: #4d4d4d; font-weight: 700; }
.inspect-scroll { position: absolute; top: 55px; right: 4px; bottom: 12px; width: 3px; background: #868686; }

.status { display: flex; align-items: center; gap: 12px; height: 26px; flex: none; padding: 0 10px; background: #191919; color: #777; }
.version { margin-left: auto; color: #fd942b; }
.taskbar { display: flex; justify-content: space-between; height: 8px; flex: none; overflow: hidden; background: linear-gradient(90deg, #24363f, #2a3338 70%, #1f323b); color: #fff; }
.task { width: 160px; margin-left: 504px; background: #5a6668; }
.clock { margin: 4px 77px 0 0; }

/* annotation */
.arrow { position: absolute; inset: 0; width: 100%; height: 100%; pointer-events: none; }
.note { position: absolute; left: 1596px; top: 637px; width: 238px; height: 26px; padding-left: 20px; border: 1px solid #fb3b3b; color: #fb3b3b; font-size: 16px; line-height: 22px; }
```
